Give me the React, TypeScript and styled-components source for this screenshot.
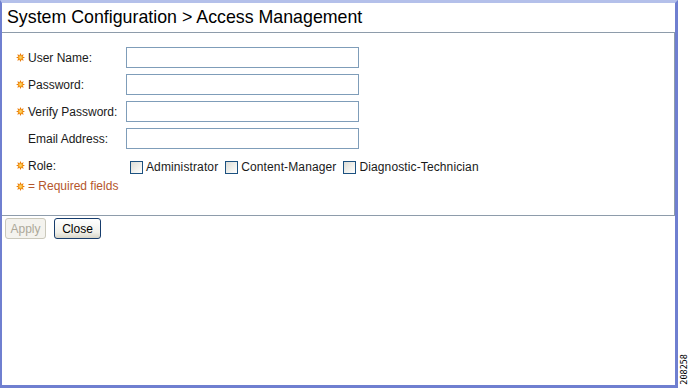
import React from "react";
import styled, { createGlobalStyle } from "styled-components";

const GlobalStyle = createGlobalStyle`
  html, body {
    margin: 0;
    padding: 0;
    background: #fff;
  }
  body {
    font-family: "Liberation Sans", Arial, sans-serif;
    font-size: 12px;
    color: #1a1a1a;
  }
`;

const Page = styled.div`
  width: 690px;
  height: 388px;
  display: flex;
  background: #fff;
`;

const Frame = styled.div`
  width: 678px;
  height: 388px;
  box-sizing: border-box;
  border-style: solid;
  border-color: #6f7fd0;
  border-top-color: #b4c0ea;
  border-width: 3px 3px 3px 2px;
  display: flex;
  flex-direction: column;
  background: #fff;
`;

const Title = styled.div`
  height: 29px;
  display: flex;
  align-items: center;
  padding-left: 5px;
  font-size: 17.8px;
  color: #000;
  border-bottom: 1px solid #8e9cab;
`;

const Panel = styled.div`
  height: 183px;
  box-sizing: border-box;
  padding: 14px 0 0 14px;
  border-bottom: 1px solid #8e9cab;
  border-right: 1px solid #8e9cab;
`;

const Form = styled.div`
  display: grid;
  grid-template-columns: 110px auto;
  grid-auto-rows: 21px;
  row-gap: 6px;
  align-items: center;
`;

const Label = styled.div<{ $plain?: boolean }>`
  display: flex;
  align-items: center;
  gap: 3px;
  padding-left: ${({ $plain }) => ($plain ? "12px" : "0")};
  color: #1a1a1a;
`;

const Input = styled.input`
  width: 233px;
  height: 21px;
  box-sizing: border-box;
  border: 1px solid #7f9db9;
  margin: 0;
  padding: 0 3px;
  font: inherit;
  background: #fff;
`;

const Roles = styled.div`
  display: flex;
  align-items: center;
  padding-left: 4px;
  margin-top: 3px;
  letter-spacing: 0.12px;
`;

const RoleOption = styled.label`
  display: flex;
  align-items: center;
  gap: 3px;
  margin-right: 7px;
`;

const Box = styled.span`
  width: 13px;
  height: 13px;
  box-sizing: border-box;
  border: 1px solid #1c5180;
  background: linear-gradient(135deg, #dcdcd6 0%, #f2f2ee 60%, #fff 100%);
`;

const Required = styled.div`
  display: flex;
  align-items: center;
  gap: 3px;
  margin-top: 3px;
  color: #b4562c;
`;

const ButtonRow = styled.div`
  display: flex;
  gap: 8px;
  padding: 2px 0 0 3px;
`;

const Button = styled.button<{ disabled?: boolean; $width: number }>`
  width: ${({ $width }) => $width}px;
  height: 21px;
  box-sizing: border-box;
  padding: 0;
  font: inherit;
  font-size: 12px;
  border-radius: 3px;
  border: 1px solid ${({ disabled }) => (disabled ? "#cac8bb" : "#163c6c")};
  color: ${({ disabled }) => (disabled ? "#aca899" : "#000")};
  background: ${({ disabled }) =>
    disabled ? "#f4f3ee" : "linear-gradient(#ffffff, #f0f0ea 70%, #d8d5c8)"};
`;

const Side = styled.div`
  flex: 1;
  display: flex;
  align-items: flex-end;
  justify-content: center;
  padding-bottom: 3px;
`;

const Stamp = styled.div`
  writing-mode: vertical-rl;
  transform: rotate(180deg);
  font-family: "DejaVu Sans Mono", monospace;
  font-size: 8.5px;
  color: #000;
`;

const Star = () => (
  <svg width="9" height="9" viewBox="0 0 18 18">
    {Array.from({ length: 8 }).map((_, i) => (
      <path
        key={i}
        d="M9 0 L11.2 5 L6.8 5 Z"
        fill="#e8780a"
        transform={`rotate(${i * 45} 9 9)`}
      />
    ))}
    <circle cx="9" cy="9" r="5.2" fill="#f39a1a" />
    <circle cx="9" cy="9" r="2.8" fill="#fbd060" />
  </svg>
);

const fields = [
  { label: "User Name:", required: true, type: "text" },
  { label: "Password:", required: true, type: "password" },
  { label: "Verify Password:", required: true, type: "password" },
  { label: "Email Address:", required: false, type: "text" },
];

export default function App() {
  return (
    <Page>
      <GlobalStyle />
      <Frame>
        <Title>System Configuration &gt; Access Management</Title>
        <Panel>
          <Form>
            {fields.map((f) => (
              <React.Fragment key={f.label}>
                <Label $plain={!f.required}>
                  {f.required && <Star />}
                  {f.label}
                </Label>
                <Input type={f.type} />
              </React.Fragment>
            ))}
            <Label>
              <Star />
              Role:
            </Label>
            <Roles>
              {["Administrator", "Content-Manager", "Diagnostic-Technician"].map((r) => (
                <RoleOption key={r}>
                  <Box />
                  {r}
                </RoleOption>
              ))}
            </Roles>
          </Form>
          <Required>
            <Star />= Required fields
          </Required>
        </Panel>
        <ButtonRow>
          <Button disabled $width={41}>Apply</Button>
          <Button $width={47}>Close</Button>
        </ButtonRow>
      </Frame>
      <Side>
        <Stamp>208258</Stamp>
      </Side>
    </Page>
  );
}
